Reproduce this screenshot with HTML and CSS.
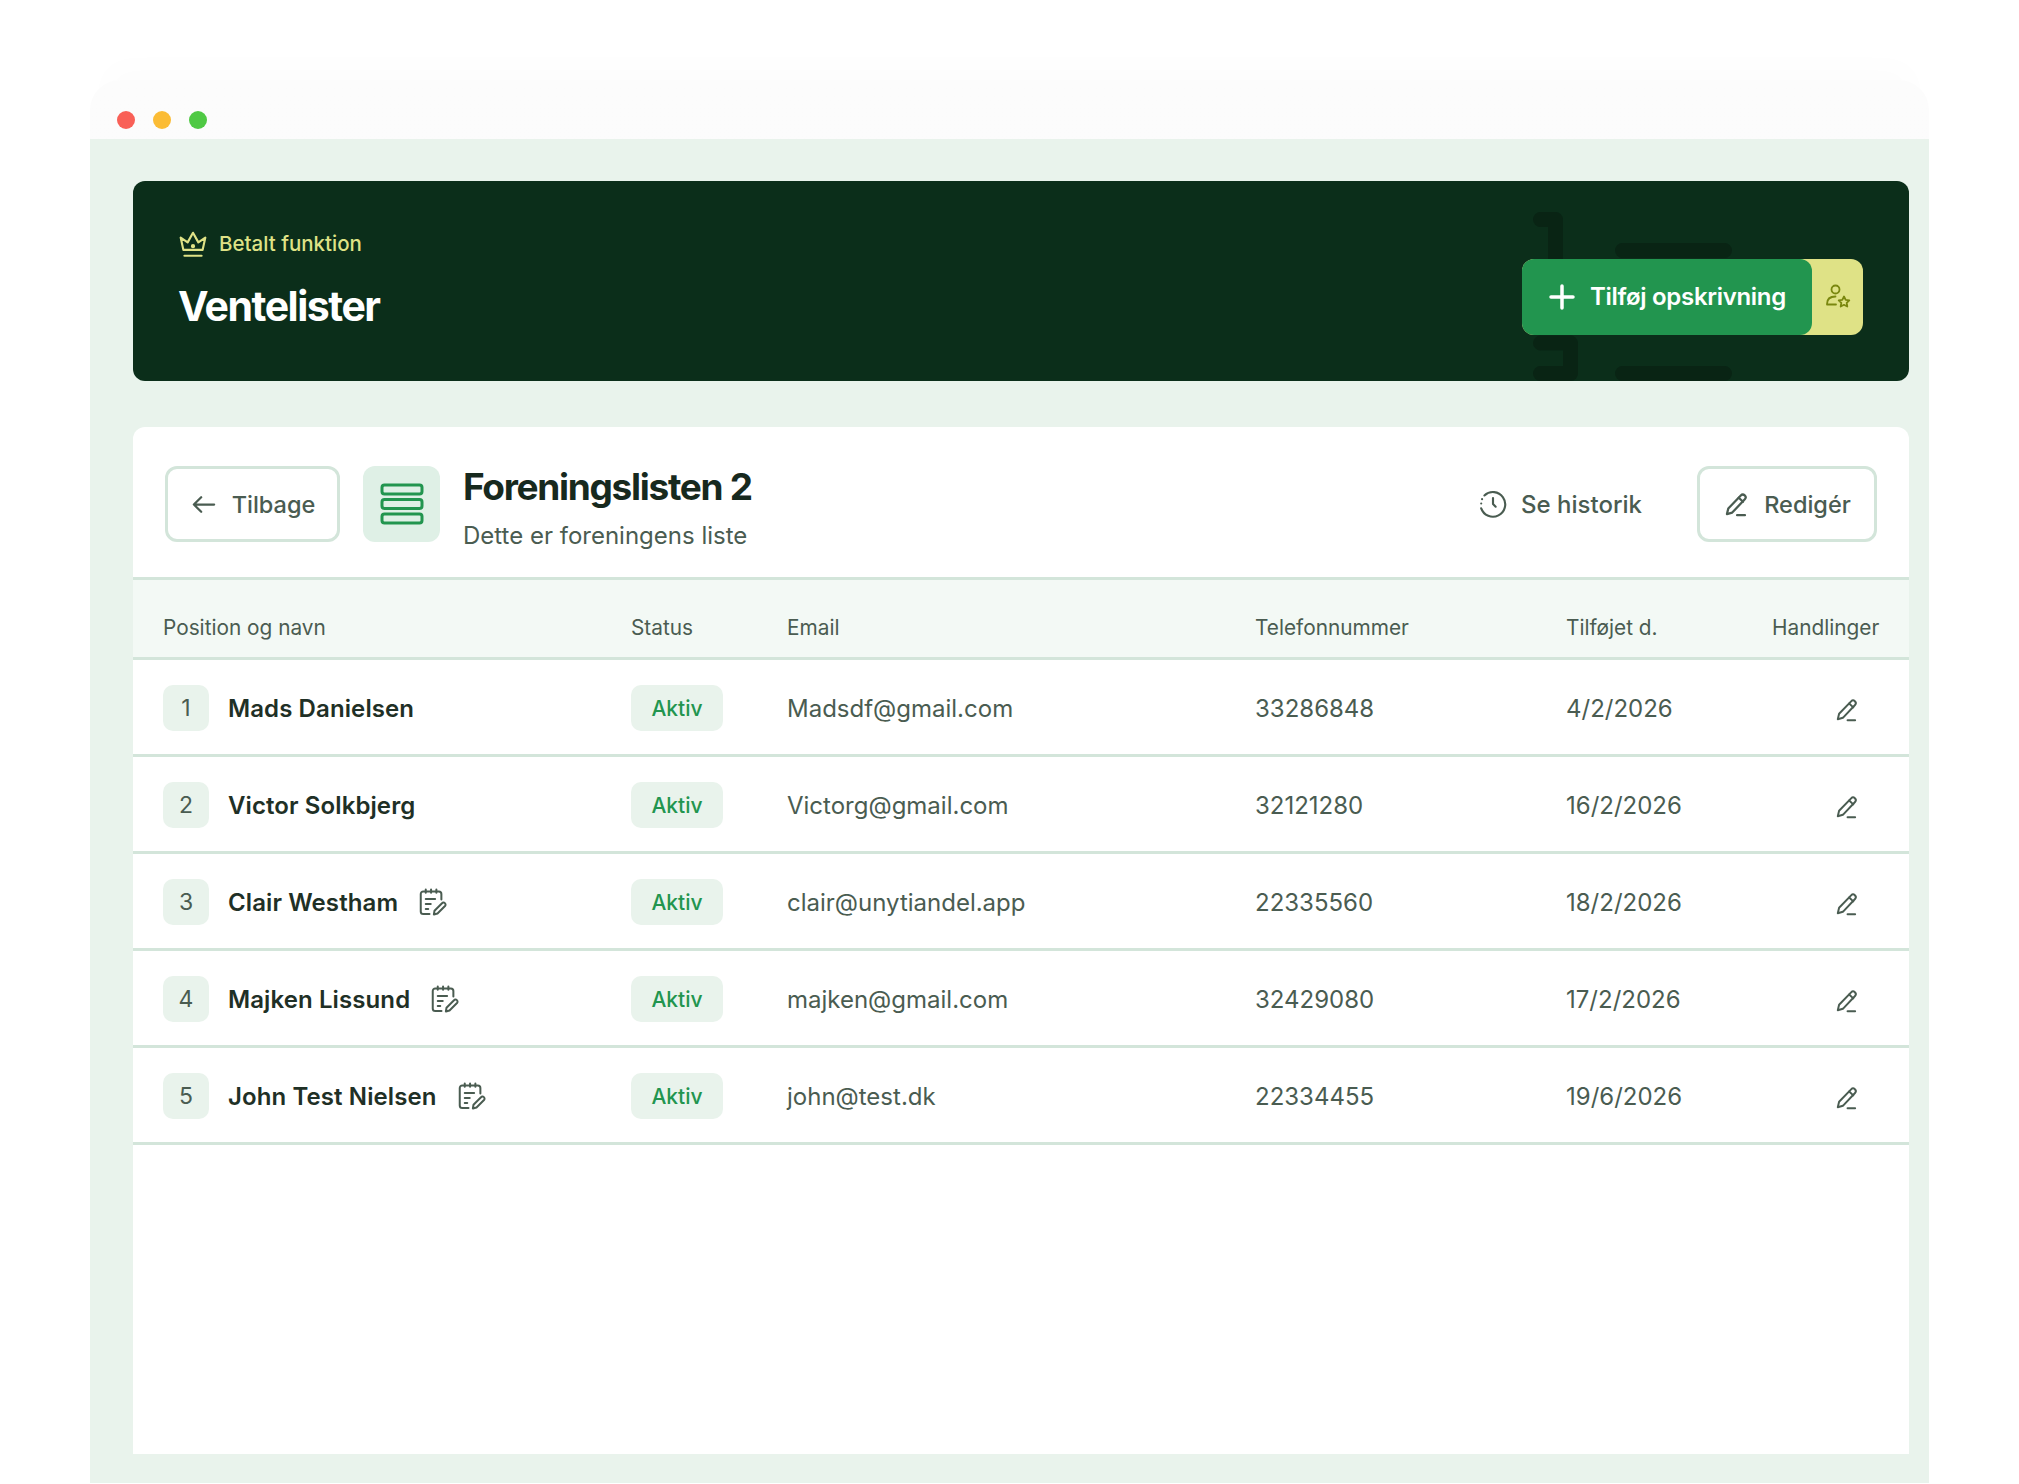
FILE: index.html
```html
<!DOCTYPE html>
<html lang="da">
<head>
    <meta charset="UTF-8">
    <meta name="viewport" content="width=device-width, initial-scale=1.0">
    <title>Ventelister</title>
    <link rel="stylesheet" href="styles.css">
</head>
<body>
    <svg class="defs" width="0" height="0" aria-hidden="true">
        <symbol id="pencil" viewBox="0 0 24 24">
            <path d="M3.5 20.5l1.2-5L15.8 4a2.4 2.4 0 0 1 3.6 3.4L8.2 19.2z"/>
            <path d="M14 6l3.8 3.6"/>
            <path d="M12.5 21.5h7"/>
        </symbol>
        <symbol id="note" viewBox="0 0 24 24">
            <path d="M10 21.500H5a2 2 0 0 1-2-2V5.500a2 2 0 0 1 2-2h12.500a2 2 0 0 1 2 2V10"/>
            <path d="M7 2v2.500M11.250 2v2.500M15.500 2v2.500"/>
            <path d="M7 9.500h7.500M7 13.500h4M7 17.500h2"/>
            <path d="M13.500 22l.5-3 6-6a1.600 1.600 0 0 1 2.400 2.200l-6 6z"/>
        </symbol>
    </svg>

    <div class="frame">
        <div class="chrome">
            <span class="dot red"></span>
            <span class="dot yellow"></span>
            <span class="dot green"></span>
        </div>

        <main class="content">
            <!-- Hero -->
            <section class="hero">
                <svg class="hero-mark" viewBox="0 0 200 169" aria-hidden="true">
                    <path d="M7.500 7.500h15V70"/>
                    <path d="M7.500 131h30v30.500h-30"/>
                    <path d="M89.500 38.500h102M89.500 161.500h102"/>
                </svg>
                <div class="hero-text">
                    <div class="paid">
                        <svg class="icon crown" viewBox="0 0 28 28">
                            <path d="M5 19.500L2.500 8l6.500 4.500L14 3.500l5 9L25.500 8 23 19.500z"/>
                            <path d="M6 25h16"/>
                            <circle cx="14" cy="16" r="1" class="fill"/>
                        </svg>
                        <span>Betalt funktion</span>
                    </div>
                    <h1>Ventelister</h1>
                </div>
                <div class="add-group">
                    <button class="add-btn">
                        <svg class="icon plus" viewBox="0 0 26 26"><path d="M13 2v22M2 13h22"/></svg>
                        Tilføj opskrivning
                    </button>
                    <span class="add-extra">
                        <svg class="icon user-star" viewBox="0 0 28 28">
                            <circle cx="11.500" cy="6.500" r="4"/>
                            <path d="M3 21c0-4.500 3-7.500 8.500-7.500M3 21.500h9"/>
                            <path d="M20 13.500l1.700 3.300 3.600.5-2.600 2.500.6 3.700-3.300-1.700-3.300 1.700.6-3.700-2.600-2.500 3.600-.5z"/>
                        </svg>
                    </span>
                </div>
            </section>

            <!-- Liste -->
            <section class="card">
                <div class="toolbar">
                    <button class="btn">
                        <svg class="icon arrow" viewBox="0 0 24 24"><path d="M21 12H3M9.500 5.500L3 12l6.500 6.500"/></svg>
                        Tilbage
                    </button>
                    <span class="list-badge">
                        <svg class="icon" viewBox="0 0 44 44">
                            <rect x="2" y="3" width="40" height="9" rx="2.500"/>
                            <rect x="2" y="17.500" width="40" height="9" rx="2.500"/>
                            <rect x="2" y="32" width="40" height="9" rx="2.500"/>
                        </svg>
                    </span>
                    <div class="list-title">
                        <h2>Foreningslisten 2</h2>
                        <p>Dette er foreningens liste</p>
                    </div>
                    <a class="history">
                        <svg class="icon" viewBox="0 0 28 28">
                            <path d="M3 18A11.500 11.500 0 1 0 6 6"/>
                            <path d="M3 13.500v.01M3.800 9.500v.01"/>
                            <path d="M14 8.500V14l2.500 2.500"/>
                        </svg>
                        Se historik
                    </a>
                    <button class="btn edit">
                        <svg class="icon"><use href="#pencil"/></svg>
                        Redigér
                    </button>
                </div>

                <table class="waitlist">
                    <colgroup>
                        <col class="c-name"><col class="c-status"><col class="c-email"><col class="c-phone"><col class="c-date"><col class="c-actions">
                    </colgroup>
                    <thead>
                        <tr>
                            <th class="first">Position og navn</th>
                            <th>Status</th>
                            <th>Email</th>
                            <th>Telefonnummer</th>
                            <th>Tilføjet d.</th>
                            <th class="last">Handlinger</th>
                        </tr>
                    </thead>
                    <tbody>
                        <tr>
                            <td class="first"><div class="person"><span class="pos">1</span><strong>Mads Danielsen</strong></div></td>
                            <td><span class="status">Aktiv</span></td>
                            <td>Madsdf@gmail.com</td>
                            <td>33286848</td>
                            <td>4/2/2026</td>
                            <td class="last"><svg class="icon row-edit"><use href="#pencil"/></svg></td>
                        </tr>
                        <tr>
                            <td class="first"><div class="person"><span class="pos">2</span><strong>Victor Solkbjerg</strong></div></td>
                            <td><span class="status">Aktiv</span></td>
                            <td>Victorg@gmail.com</td>
                            <td>32121280</td>
                            <td>16/2/2026</td>
                            <td class="last"><svg class="icon row-edit"><use href="#pencil"/></svg></td>
                        </tr>
                        <tr>
                            <td class="first"><div class="person"><span class="pos">3</span><strong>Clair Westham</strong><svg class="icon note"><use href="#note"/></svg></div></td>
                            <td><span class="status">Aktiv</span></td>
                            <td>clair@unytiandel.app</td>
                            <td>22335560</td>
                            <td>18/2/2026</td>
                            <td class="last"><svg class="icon row-edit"><use href="#pencil"/></svg></td>
                        </tr>
                        <tr>
                            <td class="first"><div class="person"><span class="pos">4</span><strong>Majken Lissund</strong><svg class="icon note"><use href="#note"/></svg></div></td>
                            <td><span class="status">Aktiv</span></td>
                            <td>majken@gmail.com</td>
                            <td>32429080</td>
                            <td>17/2/2026</td>
                            <td class="last"><svg class="icon row-edit"><use href="#pencil"/></svg></td>
                        </tr>
                        <tr>
                            <td class="first"><div class="person"><span class="pos">5</span><strong>John Test Nielsen</strong><svg class="icon note"><use href="#note"/></svg></div></td>
                            <td><span class="status">Aktiv</span></td>
                            <td>john@test.dk</td>
                            <td>22334455</td>
                            <td>19/6/2026</td>
                            <td class="last"><svg class="icon row-edit"><use href="#pencil"/></svg></td>
                        </tr>
                    </tbody>
                </table>
            </section>
        </main>
    </div>
</body>
</html>
```

FILE: styles.css
```css
/* Basic Styles */
body {
    font-family: 'Inter', sans-serif;
    background: #fff;
    color: #4a5c51;
    margin: 0;
    padding: 0;
}

button {
    font-family: inherit;
}

.defs {
    display: block;
    height: 0;
}

.icon {
    fill: none;
    stroke: currentColor;
    stroke-width: 2;
    stroke-linecap: round;
    stroke-linejoin: round;
    flex-shrink: 0;
}

/* Browser frame */
.frame {
    width: 1839px;
    margin: 80px 90px 0;
    background: linear-gradient(#fcfcfc, #fafafa);
    border-radius: 30px 30px 0 0;
    box-shadow: 0 -30px 30px -14px rgba(0, 0, 0, 0.012);
}

.chrome {
    height: 59px;
    display: flex;
    align-items: center;
    gap: 18px;
    padding: 21px 27px 0;
    box-sizing: border-box;
}

.dot {
    width: 18px;
    height: 18px;
    border-radius: 50%;
}

.red { background: #f96057; }
.yellow { background: #fbbc35; }
.green { background: #4fc944; }

.content {
    background: #e9f3ec;
    padding: 42px 20px 29px 43px;
}

/* Hero */
.hero {
    position: relative;
    height: 200px;
    box-sizing: border-box;
    padding: 0 46px;
    display: flex;
    align-items: center;
    justify-content: space-between;
    background: #0b2e1a;
    border-radius: 12px;
    overflow: hidden;
}

.hero-mark {
    position: absolute;
    left: 1400px;
    top: 31px;
    width: 200px;
    height: 169px;
    fill: none;
    stroke: #092414;
    stroke-width: 15;
    stroke-linecap: round;
    stroke-linejoin: round;
}

.hero-text {
    position: relative;
    margin-top: -4px;
}

.paid {
    display: flex;
    align-items: center;
    gap: 11px;
    color: #dfe286;
    font-size: 20.500px;
    font-weight: 500;
}

.crown {
    width: 30px;
    height: 30px;
    margin-left: -1px;
}

.crown .fill {
    fill: currentColor;
}

h1 {
    margin: 23px 0 0 -1px;
    color: #fff;
    font-size: 41px;
    line-height: 48px;
    font-weight: 700;
    letter-spacing: -1.500px;
}

.add-group {
    position: relative;
    display: flex;
    height: 76px;
    margin-top: 31px;
    background: #dfe286;
    border-radius: 12px;
}

.add-btn {
    display: flex;
    align-items: center;
    gap: 15px;
    width: 290px;
    box-sizing: border-box;
    padding: 0 0 0 27px;
    border: none;
    border-radius: 12px;
    background: #22954f;
    color: #fff;
    font-size: 24px;
    font-weight: 600;
    letter-spacing: -0.300px;
    white-space: nowrap;
}

.plus {
    width: 26px;
    height: 26px;
    stroke-width: 3.500;
}

.add-extra {
    width: 51px;
    display: flex;
    align-items: center;
    justify-content: center;
    color: #7a870f;
}

.user-star {
    width: 28px;
    height: 28px;
    stroke-width: 1.800;
}

/* Card */
.card {
    height: 1027px;
    margin-top: 46px;
    background: #fff;
    border-radius: 12px 12px 0 0;
    overflow: hidden;
}

.toolbar {
    display: flex;
    align-items: center;
    padding: 39px 32px 35px;
    border-bottom: 3px solid #d3e5da;
}

.btn {
    display: flex;
    align-items: center;
    justify-content: center;
    gap: 14px;
    width: 175px;
    height: 76px;
    box-sizing: border-box;
    border: 3px solid #d3e5da;
    border-radius: 12px;
    background: #fff;
    color: #4a5c51;
    font-size: 23.500px;
    font-weight: 500;
    cursor: pointer;
}

.btn .icon {
    width: 27px;
    height: 27px;
}

.btn .arrow {
    width: 28px;
}

.btn.edit {
    width: 180px;
}

.list-badge {
    width: 77px;
    height: 76px;
    margin-left: 23px;
    display: flex;
    align-items: center;
    justify-content: center;
    border-radius: 12px;
    background: #dff0e6;
    color: #22954f;
}

.list-badge .icon {
    width: 44px;
    height: 44px;
    stroke-width: 3;
}

.list-title {
    height: 76px;
    margin-left: 23px;
    flex: 1;
}

h2 {
    margin: 0;
    color: #17291e;
    font-size: 37px;
    line-height: 42px;
    font-weight: 700;
    letter-spacing: -1.300px;
}

.list-title p {
    margin: 14px 0 0;
    font-size: 24px;
    line-height: 27px;
}

.history {
    display: flex;
    align-items: center;
    gap: 13px;
    margin-right: 55px;
    font-size: 24px;
    font-weight: 500;
}

.history .icon {
    width: 30px;
    height: 30px;
}

/* Table */
.waitlist {
    width: 100%;
    table-layout: fixed;
    border-collapse: separate;
    border-spacing: 0;
}

.c-name { width: 498px; }
.c-status { width: 156px; }
.c-email { width: 468px; }
.c-phone { width: 311px; }
.c-date { width: 206px; }

th, td {
    padding: 0;
    text-align: left;
    border-bottom: 3px solid #d3e5da;
    white-space: nowrap;
}

th {
    height: 80px;
    box-sizing: border-box;
    padding-top: 17px;
    background: #f3f9f5;
    font-size: 20.800px;
    font-weight: 400;
}

td {
    height: 92px;
    padding-top: 2px;
    font-size: 24px;
}

.first {
    padding-left: 30px;
}

th.last {
    text-align: right;
    padding-right: 32px;
}

td.last {
    text-align: right;
    padding-right: 49px;
}

.person {
    display: flex;
    align-items: center;
}

.pos {
    width: 46px;
    height: 46px;
    display: flex;
    align-items: center;
    justify-content: center;
    border-radius: 10px;
    background: #e9f3ec;
    font-size: 23px;
}

.person strong {
    margin-left: 19px;
    color: #1f3026;
    font-weight: 600;
    letter-spacing: 0.100px;
}

.note {
    width: 30px;
    height: 30px;
    margin-left: 19px;
    stroke-width: 1.600;
}

.status {
    display: inline-flex;
    align-items: center;
    justify-content: center;
    width: 92px;
    height: 46px;
    border-radius: 10px;
    background: #e9f3ec;
    color: #22954f;
    font-size: 21px;
    font-weight: 500;
}

.row-edit {
    width: 26px;
    height: 26px;
    vertical-align: middle;
    stroke-width: 1.800;
}
```
